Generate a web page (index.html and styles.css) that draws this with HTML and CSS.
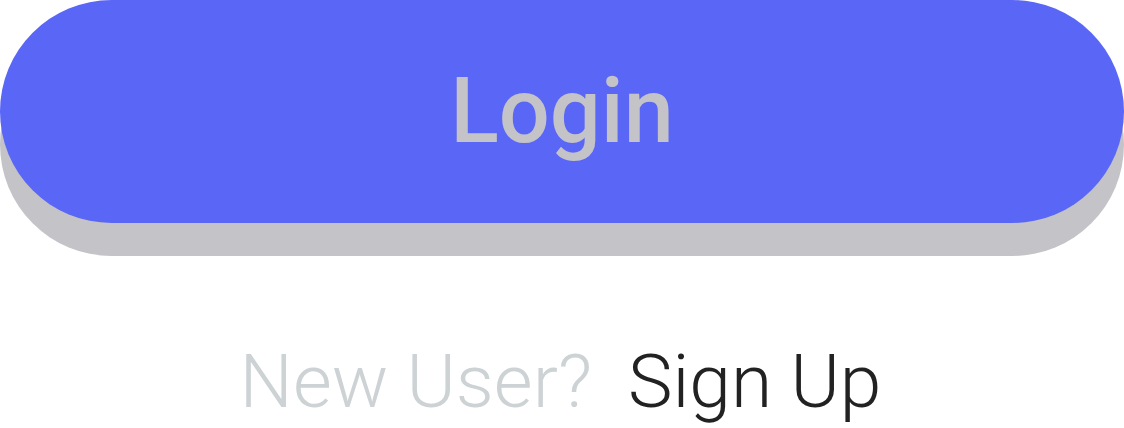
FILE: index.html
```html
<!DOCTYPE html>
<html>
<head>
<meta charset="utf-8">
<link rel="stylesheet" href="styles.css">
</head>
<body>
<div class="page">
  <button class="login-btn">Login</button>
  <div class="signup">
    <span class="muted">New User?</span>
    <span class="link">Sign Up</span>
  </div>
</div>
</body>
</html>
```
FILE: styles.css
```css
html, body {
  margin: 0;
  padding: 0;
  background: #ffffff;
}
.page {
  width: 1124px;
  height: 428px;
  display: flex;
  flex-direction: column;
  align-items: center;
  font-family: Roboto, "Liberation Sans", sans-serif;
}
.login-btn {
  width: 1124px;
  height: 223px;
  border: none;
  border-radius: 112px;
  background: #5a66f5;
  box-shadow: 0 33px 0 #c4c3c8;
  color: #c4c3c8;
  font-family: Roboto, "Liberation Sans", sans-serif;
  font-weight: 500;
  font-size: 90px;
  line-height: 1;
  padding: 0;
  margin: 0;
}
.signup {
  margin-top: 121px;
  display: flex;
  gap: 36px;
  font-size: 75px;
  font-weight: 300;
  line-height: 1;
  margin-left: -3px;
}
.muted { color: #cdd2d5; }
.link { color: #222222; }
```
